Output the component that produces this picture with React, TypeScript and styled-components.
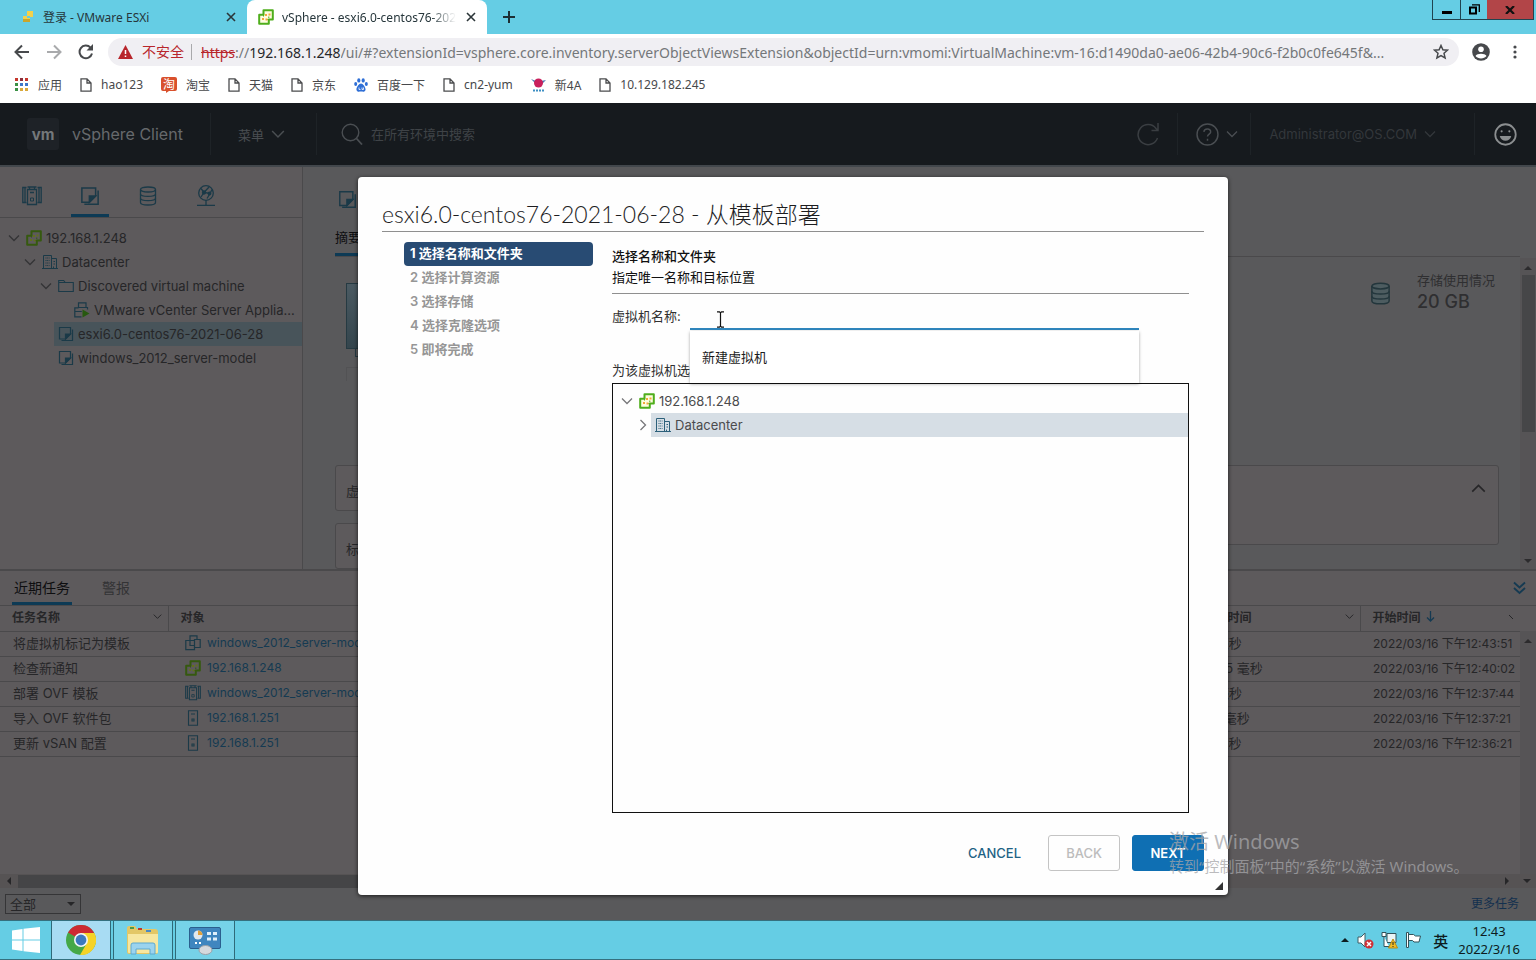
import React from 'react';
import styled, { createGlobalStyle } from 'styled-components';

const UI = `Inter, "Noto Sans CJK SC", sans-serif`;
const SYSTEM = `"Noto Sans", "Noto Sans CJK SC", sans-serif`;
const DISPLAY = `Lato, "Noto Sans CJK SC", sans-serif`;

const c = {
  sky: '#65cde4',
  header: '#161a1e',
  panel: '#5d5a5c',
  main: '#59595b',
  line: '#4a494b',
  text: '#262628',
  link: '#153a52',
  accent: '#0d3a55',
  outline: '#1b3a48',
  blue: '#0f6fb3',
};

const GlobalStyle = createGlobalStyle`
  * { box-sizing: border-box; }
  body { margin: 0; font-family: ${UI}; font-size: 13px; color: ${c.text}; overflow: hidden; }
  button, input, select { font: inherit; color: inherit; }
  button { background: none; border: 0; padding: 0; cursor: pointer; }
  h1, h2, h3, p, ul, ol { margin: 0; padding: 0; }
  ul, ol { list-style: none; }
  a { text-decoration: none; }
  svg { display: block; flex: none; }
`;

const Screen = styled.div`
  display: flex;
  flex-direction: column;
  min-height: 100vh;
  position: relative;
`;

/* ---------- icons ---------- */

type IconProps = { size?: number };

const Chevron = ({ dir = 'down', size = 12, width = 1.3 }: { dir?: 'down' | 'right' | 'up'; size?: number; width?: number }) => {
  const d = { down: 'M1 3.5 6 8.5 11 3.5', up: 'M1 8.5 6 3.5 11 8.5', right: 'M3.5 1 8.5 6 3.5 11' }[dir];
  return (
    <svg width={size} height={size} viewBox="0 0 12 12" fill="none" stroke="currentColor" strokeWidth={width}>
      <path d={d} />
    </svg>
  );
};

const VCenterIcon = ({ size = 16, dim = false }: IconProps & { dim?: boolean }) => {
  const green = dim ? '#36590f' : '#4fae1c';
  const dot = dim ? '#62701d' : '#f2a93b';
  return (
    <svg width={size} height={size} viewBox="0 0 16 16" fill={dim ? 'none' : '#fffde0'} stroke={green} strokeWidth="2" strokeLinejoin="round">
      <path d="M5.500 1.200h9.300v9.300h-4v4.300H1.200V5.800h4.300z" />
      <path d="M5.500 5.800v1.700M8.500 5.800H7M10.800 10.500H9.300M10.800 7.500V9" strokeWidth="1" />
      <g fill={dot} stroke="none">
        <rect x="4" y="9" width="2" height="2" />
        <rect x="7.500" y="9.500" width="2" height="2" />
        <rect x="7" y="5" width="2" height="2" />
        <rect x="10.500" y="4.500" width="2" height="2" />
      </g>
    </svg>
  );
};

const DatacenterIcon = () => (
  <svg width="16" height="16" viewBox="0 0 16 16" fill="none" stroke="currentColor">
    <path d="M1.500 14.500V1.500h8v13M9.500 4.500h5v10M0 14.500h16" />
    <path d="M3.500 4h4M3.500 6.500h4M3.500 9h4M3.500 11.500h4" strokeDasharray="1 .7" />
    <path d="M11.500 7.500h1.500M11.500 10h1.500M11.500 12.500v2" />
  </svg>
);

const FolderIcon = () => (
  <svg width="16" height="16" viewBox="0 0 16 16" fill="none" stroke="currentColor" strokeWidth="1.100">
    <path d="M.7 13.500v-11h5l1.500 2h8.100v9zM.7 4.500h6.500" />
  </svg>
);

const VmRunningIcon = () => (
  <svg width="16" height="16" viewBox="0 0 16 16" fill="none" stroke="currentColor" strokeWidth="1.200">
    <path d="M4.500 6V.8h7.500V5M4.500 5.800H.8v9h6.700M.8 9.500h7M4.500 5.500h9v2" />
    <path d="M8.500 7.500v8l7-4z" fill="#27590f" stroke="none" />
  </svg>
);

const VmIcon = () => (
  <svg width="16" height="16" viewBox="0 0 16 16" fill="none" stroke="currentColor" strokeWidth="1.200">
    <path d="M5 5.500V.8h7V4.500M5 5.500H.8v9.200h8.700v-2.200M5 5.500h4.500M5 5.500v5h4.500" />
    <path d="M9.500 4.500h5.700v8H9.500z" />
  </svg>
);

const TemplateIcon = ({ size = 16 }: IconProps) => (
  <svg width={size} height={size} viewBox="0 0 16 16" fill="none" stroke="currentColor" strokeWidth="1.200">
    <path d="M1.500 1.500h11v6.500l-5 5h-6z" />
    <path d="M12.500 8h-5v5z" fill="currentColor" />
    <path d="M14.500 3.500v11h-11" />
  </svg>
);

const HostsIcon = ({ size = 16 }: IconProps) => (
  <svg width={size} height={size} viewBox="0 0 20 20" fill="none" stroke="currentColor" strokeWidth="1.300">
    <path d="M4.500 1.500H.8v15h3.700M15.500 1.500h3.700v15h-3.700M3 1.500v15M17 1.500v15" />
    <path d="M5.500 3.500h9v15h-9zM7.500 1v2.500M12.500 1v2.500M5.500 1h9M8 6.500h4" />
    <path d="M8.500 12h3v3h-3z" strokeWidth="1" />
  </svg>
);

const HostIcon = () => (
  <svg width="16" height="16" viewBox="0 0 16 16" fill="none" stroke="currentColor" strokeWidth="1.100">
    <path d="M3.500.8h9v14.400h-9zM6 4h4M7 9h2v2H7z" />
  </svg>
);

const DatastoreIcon = ({ size = 20, fill = 'none' }: IconProps & { fill?: string }) => (
  <svg width={size} height={size} viewBox="0 0 20 20" fill={fill} stroke="currentColor" strokeWidth="1.300">
    <path d="M2.500 3.500v13c0 1.600 3.300 2.500 7.500 2.500s7.500-.9 7.500-2.500v-13" />
    <ellipse cx="10" cy="3.500" rx="7.500" ry="2.500" />
    <path d="M2.500 8c0 1.600 3.300 2.400 7.500 2.400s7.500-.8 7.500-2.400M2.500 12.300c0 1.600 3.300 2.400 7.500 2.400s7.500-.8 7.500-2.400" fill="none" />
  </svg>
);

const NetworkIcon = () => (
  <svg width="22" height="22" viewBox="0 0 22 22" fill="none" stroke="currentColor" strokeWidth="1.300">
    <circle cx="11" cy="8" r="7.300" />
    <path d="M6 3.500l3 4 6 1 2-4M9 7.500 6 12M9 7.500 14 2M15 8.500l-3 5M11 15.300v5M2 20.300h18" />
    <circle cx="9" cy="7.500" r="1.500" fill="currentColor" />
    <circle cx="14.500" cy="8.500" r="1.300" fill="currentColor" />
  </svg>
);

const PageIcon = () => (
  <svg width="12" height="14" viewBox="0 0 12 14" fill="none" stroke="#4b4c4e" strokeWidth="1.300">
    <path d="M1 .8h6L11 5v8.200H1zM7 .8V5h4" />
  </svg>
);

/* ---------- browser chrome ---------- */

const TabStrip = styled.div`
  display: flex;
  height: 34px;
  background: ${c.sky};
  font-family: ${SYSTEM};
  font-size: 12px;
  color: #26363b;
`;

const BrowserTab = styled.div<{ $active?: boolean }>`
  display: flex;
  align-items: center;
  gap: 8px;
  width: ${p => (p.$active ? 240 : 247)}px;
  padding: 0 9px 0 ${p => (p.$active ? 11 : 21)}px;
  border-radius: 8px 8px 0 0;
  background: ${p => (p.$active ? '#fff' : 'transparent')};
`;

const TabTitle = styled.span<{ $fade?: boolean }>`
  flex: 1;
  overflow: hidden;
  white-space: nowrap;
  ${p => p.$fade && 'mask-image: linear-gradient(90deg, #000 85%, transparent);'}
`;

const TabButton = styled.button`
  display: flex;
  align-items: center;
  padding: 2px;
`;

const NewTab = styled(TabButton)`
  margin-left: 14px;
`;

const WindowButtons = styled.div`
  display: flex;
  margin: 0 2px 0 auto;
  height: 20px;
  border: 1px solid #1f4450;
  border-top: 0;
`;

const WindowButton = styled.button<{ $close?: boolean }>`
  display: grid;
  place-items: center;
  width: ${p => (p.$close ? 46 : 27)}px;
  border-left: ${p => (p.$close ? 0 : 1)}px solid #1f4450;
  background: ${p => (p.$close ? '#b24548' : 'transparent')};
  &:first-child { border-left: 0; }
`;

const Toolbar = styled.div`
  display: flex;
  align-items: center;
  height: 36px;
  padding: 0 14px;
  background: #fff;
  color: #47494c;
  font-family: ${SYSTEM};
`;

const NavButtons = styled.div`
  display: flex;
  gap: 16px;
  margin-right: 14px;
`;

const NavButton = styled.button<{ $off?: boolean }>`
  color: ${p => (p.$off ? '#a9aaac' : '#47494c')};
`;

const AddressBar = styled.div`
  display: flex;
  flex: 1;
  align-items: center;
  height: 28px;
  padding: 0 10px;
  border-radius: 14px;
  background: #f0eff3;
  font-size: 14px;
  color: #74777a;
`;

const Insecure = styled.span`
  display: flex;
  align-items: center;
  gap: 9px;
  padding-right: 7px;
  margin-right: 9px;
  border-right: 1px solid #a9a9ac;
  line-height: 16px;
  color: #b8262c;
`;

const Scheme = styled.s`
  color: #b8262c;
`;

const Host = styled.span`
  color: #26272a;
`;

const UrlInput = styled.input`
  flex: 1;
  min-width: 0;
  padding: 0;
  border: 0;
  outline: 0;
  background: transparent;
`;

const ToolbarEnd = styled.div`
  display: flex;
  align-items: center;
  gap: 18px;
  margin-left: 13px;
`;

const Bookmarks = styled.nav`
  display: flex;
  align-items: center;
  gap: 18px;
  height: 33px;
  padding: 0 15px 4px;
  background: #fff;
  font-family: ${SYSTEM};
  font-size: 12px;
`;

const Bookmark = styled.a`
  display: flex;
  align-items: center;
  gap: 9px;
  color: #47484b;
`;

/* ---------- vSphere header ---------- */

const Client = styled.div`
  position: relative;
  display: flex;
  flex: 1;
  flex-direction: column;
`;

const AppHeader = styled.header`
  display: flex;
  align-items: center;
  height: 62px;
  background: ${c.header};
  color: #4a4e52;
`;

const Brand = styled.div`
  display: flex;
  align-items: center;
  gap: 13px;
  padding: 0 27px;
`;

const BrandMark = styled.div`
  display: grid;
  place-items: center;
  width: 32px;
  height: 32px;
  border-radius: 3px;
  background: #1e2227;
  color: #74787b;
  font-size: 15px;
  font-weight: 700;
`;

const BrandName = styled.h1`
  font-size: 16px;
  font-weight: 400;
  color: #66696c;
`;

const HeaderItem = styled.div`
  display: flex;
  align-items: center;
  height: 42px;
  border-left: 1px solid #1e2327;
`;

const HeaderButton = styled.button`
  display: flex;
  align-items: center;
  gap: 7px;
`;

const Search = styled.label`
  display: flex;
  flex: 1;
  align-items: center;
  gap: 8px;
  padding-left: 24px;
`;

const SearchInput = styled.input`
  width: 240px;
  padding: 0;
  border: 0;
  outline: 0;
  background: transparent;
  &::placeholder { color: #3f4347; }
`;

/* ---------- workspace ---------- */

const Workspace = styled.div`
  display: flex;
  height: 404px;
  background: ${c.main};
  border-top: 2px solid #42474c;
`;

const Sidebar = styled.aside`
  width: 303px;
  background: ${c.panel};
  border-right: 1px solid ${c.line};
`;

const ViewTabs = styled.div`
  display: flex;
  gap: 20px;
  height: 51px;
  padding-left: 13px;
  border-bottom: 1px solid ${c.line};
`;

const ViewTab = styled.button<{ $active?: boolean }>`
  display: grid;
  place-items: center;
  width: 38px;
  padding-top: 10px;
  border-bottom: 3px solid ${p => (p.$active ? c.accent : 'transparent')};
  color: ${c.outline};
`;

const Tree = styled.ul`
  padding-top: 8px;
`;

const TreeRow = styled.li<{ $level: number }>`
  display: flex;
  align-items: center;
  height: 24px;
  padding-left: ${p => p.$level * 16}px;
`;

const Toggle = styled.button<{ $color?: string }>`
  flex: none;
  width: 22px;
  height: 24px;
  padding-left: 8px;
  color: ${p => p.$color};
`;

const TreeLabel = styled.span<{ $bg?: string }>`
  display: flex;
  flex: 1;
  align-items: center;
  gap: 4px;
  min-width: 0;
  height: 24px;
  padding: 0 4px;
  background: ${p => p.$bg || 'transparent'};
  white-space: nowrap;
`;

const TreeIcon = styled.span<{ $color: string }>`
  color: ${p => p.$color};
`;

const TreeText = styled.span`
  overflow: hidden;
  text-overflow: ellipsis;
`;

const Summary = styled.main`
  display: flex;
  flex: 1;
  flex-direction: column;
  min-width: 0;
  padding-left: 32px;
`;

const ObjectBar = styled.div`
  display: flex;
  flex-direction: column;
  justify-content: space-between;
  align-items: flex-start;
  height: 90px;
  padding-top: 23px;
  border-bottom: 1px solid ${c.line};
  color: ${c.outline};
`;

const ObjectIcon = styled.span`
  padding-left: 3px;
`;

const SummaryTab = styled.button`
  padding-bottom: 7px;
  border-bottom: 3px solid ${c.accent};
  color: #0e0e10;
`;

const Overview = styled.div`
  display: flex;
  justify-content: space-between;
  height: 208px;
  padding: 12px 25px 0 11px;
`;

const ConsolePreview = styled.div`
  width: 150px;
  padding-top: 14px;
`;

const ConsoleScreen = styled.div`
  height: 66px;
  border: 1px solid #263a42;
  background: linear-gradient(#4b5a62, #34454d);
`;

const ConsoleStand = styled.div`
  height: 8px;
  margin: 0 9px;
  border: solid #263a42;
  border-width: 0 1px 1px;
`;

const ConsoleLink = styled.div`
  height: 14px;
  margin-top: 10px;
  border: 1px solid #525254;
  border-bottom: 0;
`;

const Usage = styled.dl`
  display: flex;
  gap: 25px;
  margin: 0;
  color: #2f2f31;
`;

const UsageIcon = styled.dt`
  padding-top: 13px;
  color: #23363c;
`;

const UsageValue = styled.dd`
  margin: 0;
  line-height: 22px;
`;

const Amount = styled.div`
  font-size: 18px;
  font-weight: 500;
`;

const Cards = styled.div`
  display: grid;
  grid-template-columns: 1fr 1fr;
  align-items: start;
  gap: 12px 24px;
  padding-right: 21px;
  overflow: hidden;
`;

const Card = styled.section<{ $tall?: boolean }>`
  display: flex;
  align-items: flex-start;
  justify-content: space-between;
  grid-row: ${p => (p.$tall ? 'span 2' : 'auto')};
  height: ${p => (p.$tall ? 80 : 46)}px;
  padding: 15px 12px 0 10px;
  border: 1px solid ${c.line};
  border-radius: 3px;
  background: ${c.panel};
`;

const ScrollTrack = styled.div<{ $offset?: number }>`
  display: flex;
  flex: none;
  flex-direction: column;
  align-items: center;
  width: 16px;
  margin-top: ${p => p.$offset || 0}px;
  padding: 6px 0 4px;
  background: #565456;
  color: #2c2b2d;
`;

const ScrollThumb = styled.div`
  width: 13px;
  height: 157px;
  margin: 3px 0 auto;
  background: #464648;
`;

/* ---------- task panel ---------- */

const TaskPanel = styled.section`
  display: flex;
  flex: 1;
  flex-direction: column;
  border-top: 2px solid ${c.line};
  background: ${c.panel};
`;

const TaskTabs = styled.div`
  display: flex;
  height: 35px;
  padding: 0 10px 0 12px;
  gap: 28px;
  border-bottom: 1px solid ${c.line};
  font-size: 14px;
`;

const TaskTab = styled.button<{ $active?: boolean }>`
  padding: 1px 2px 0;
  border-bottom: 3px solid ${p => (p.$active ? c.accent : 'transparent')};
  color: ${p => (p.$active ? '#0e0e10' : '#333335')};
`;

const Collapse = styled.button`
  margin-left: auto;
  color: ${c.link};
`;

const TaskTable = styled.table`
  width: 100%;
  border-collapse: collapse;
  table-layout: fixed;
  white-space: nowrap;
`;

const Th = styled.th`
  height: 25px;
  padding: 0 6px 3px 12px;
  border-right: 1px solid ${c.line};
  border-bottom: 1px solid ${c.line};
  text-align: left;
  font-size: 12px;
  font-weight: 600;
  overflow: hidden;
  &:last-child { border-right: 0; }
`;

const ThInner = styled.span`
  display: flex;
  align-items: center;
  justify-content: space-between;
`;

const Sorted = styled.span`
  display: flex;
  align-items: center;
  gap: 5px;
`;

const Td = styled.td<{ $small?: boolean }>`
  height: 25px;
  padding: 0 0 2px 13px;
  border-bottom: 1px solid ${c.line};
  font-size: ${p => (p.$small ? 12 : 13)}px;
  overflow: hidden;
`;

const ObjectLink = styled.a`
  display: flex;
  align-items: center;
  gap: 6px;
  padding-left: 4px;
  color: ${c.link};
`;

const TaskArea = styled.div`
  display: flex;
  flex: 1;
`;

const TaskGrid = styled.div`
  flex: 1;
  min-width: 0;
`;

const HorizontalScroll = styled.div`
  display: flex;
  align-items: center;
  justify-content: space-between;
  height: 14px;
  padding: 0 5px 0 5px;
  background: #565354;
`;

const HorizontalThumb = styled.div`
  width: 1010px;
  height: 13px;
  margin: 0 auto 0 5px;
  background: #454547;
`;

const RightArrows = styled.span`
  display: flex;
  gap: 12px;
`;

const TaskFooter = styled.footer`
  display: flex;
  align-items: center;
  justify-content: space-between;
  height: 32px;
  padding: 0 17px 0 5px;
  background: ${c.main};
`;

const FilterBox = styled.label`
  display: grid;
  align-items: center;
  width: 76px;
  height: 20px;
  border: 1px solid #353537;
`;

const Filter = styled.select`
  grid-area: 1 / 1;
  height: 18px;
  padding: 0 4px;
  border: 0;
  appearance: none;
  background: transparent;
  line-height: 18px;
`;

const FilterArrow = styled.span`
  grid-area: 1 / 1;
  justify-self: end;
  padding-right: 5px;
  pointer-events: none;
`;

const MoreTasks = styled.a`
  padding-bottom: 3px;
  font-size: 12px;
  color: #13304e;
`;

/* ---------- deploy dialog ---------- */

const Dialog = styled.form`
  position: absolute;
  top: 74px;
  left: 358px;
  width: 870px;
  padding: 20px 24px 24px;
  border-radius: 4px;
  background: #fefefe;
  box-shadow: 0 1px 4px rgba(0, 0, 0, 0.7);
  color: #313131;
`;

const DialogTitle = styled.h2`
  height: 35px;
  border-bottom: 1px solid #8f8f8f;
  font-family: ${DISPLAY};
  font-size: 23px;
  font-weight: 300;
  line-height: 34px;
  color: #1d1d1f;
  white-space: nowrap;
`;

const DialogBody = styled.div`
  display: grid;
  grid-template-columns: 189px 1fr;
  gap: 19px;
  padding: 10px 15px 0 22px;
`;

const Step = styled.button<{ $active?: boolean }>`
  display: block;
  width: 100%;
  height: 24px;
  padding: 0 6px 3px;
  border-radius: 4px;
  background: ${p => (p.$active ? '#284b73' : 'transparent')};
  color: ${p => (p.$active ? '#fff' : '#969696')};
  font-weight: ${p => (p.$active ? 700 : 600)};
  text-align: left;
`;

const StepHeading = styled.div`
  padding: 4px 0 5px;
  border-bottom: 1px solid #8f8f8f;
  line-height: 21px;
  color: #111;
`;

const StepTitle = styled.h3`
  font-size: 13px;
  font-weight: 500;
`;

const NameRow = styled.div`
  position: relative;
  display: flex;
  height: 24px;
  margin: 12px 0 30px;
`;

const NameLabel = styled.label`
  width: 78px;
  line-height: 21px;
`;

const NameInput = styled.input`
  width: 449px;
  height: 24px;
  padding: 0 6px;
  border: 0;
  border-bottom: 2px solid #2f86bd;
  outline: 0;
  background: transparent;
`;

const Suggestions = styled.ul`
  position: absolute;
  z-index: 1;
  top: 25px;
  left: 78px;
  width: 449px;
  padding: 14px 12px;
  background: #fff;
  box-shadow: 0 1px 3px rgba(0, 0, 0, 0.35);
  line-height: 24px;
  color: #1b1b1b;
`;

const LocationTree = styled.div`
  height: 430px;
  margin-top: 3px;
  border: 1px solid #111;
  color: #4b4b4d;
  & > ul { padding-top: 5px; }
`;

const LocationLabel = styled.p`
  line-height: 20px;
`;

const DialogButtons = styled.div`
  display: flex;
  justify-content: flex-end;
  gap: 12px;
  margin-top: 22px;
`;

const DialogButton = styled.button<{ $kind: 'text' | 'disabled' | 'primary' }>`
  min-width: 72px;
  height: 36px;
  padding: 0 12px;
  border: 1px solid ${p => ({ text: 'transparent', disabled: '#c4c4c4', primary: c.blue })[p.$kind]};
  border-radius: 3px;
  background: ${p => (p.$kind === 'primary' ? c.blue : 'transparent')};
  color: ${p => ({ text: '#1f6285', disabled: '#bcbcbc', primary: '#fff' })[p.$kind]};
  font-weight: ${p => (p.$kind === 'primary' ? 600 : 500)};
`;

const CancelButton = styled(DialogButton)`
  margin-right: 2px;
`;

const ResizeGrip = styled.span`
  position: absolute;
  right: 5px;
  bottom: 5px;
`;

const TextCursor = styled.span`
  position: absolute;
  top: 5px;
  left: 104px;
  pointer-events: none;
`;

const Watermark = styled.div`
  position: absolute;
  right: 64px;
  bottom: 82px;
  width: 303px;
  font-family: ${SYSTEM};
  font-size: 15px;
  line-height: 24px;
  color: rgba(165, 165, 168, 0.75);
  white-space: nowrap;
  pointer-events: none;
`;

const WatermarkTitle = styled.div`
  font-size: 20px;
`;

/* ---------- task bar ---------- */

const Taskbar = styled.footer`
  display: flex;
  align-items: stretch;
  height: 40px;
  border-top: 1px solid #35707f;
  border-bottom: 1px solid #35707f;
  background: ${c.sky};
  font-family: ${SYSTEM};
  color: #0d1c20;
`;

const StartButton = styled.button`
  display: grid;
  place-items: center;
  width: 51px;
`;

const AppButton = styled.button<{ $active?: boolean }>`
  display: grid;
  place-items: center;
  width: 60px;
  margin-right: 2px;
  border: solid #2f6a79;
  border-width: 0 1px;
  background: ${p => (p.$active ? '#a8dcf3' : '#76d2e8')};
`;

const Tray = styled.div`
  display: flex;
  align-items: center;
  gap: 7px;
  margin-left: auto;
  padding-right: 16px;
`;

const Clock = styled.time`
  padding-left: 3px;
  font-size: 13px;
  line-height: 18px;
  text-align: center;
`;

const InputMode = styled.span`
  padding-left: 4px;
  font-size: 15px;
  font-weight: 500;
`;

/* ---------- data ---------- */

type Node = { level: number; text: string; icon: React.ReactNode; open?: 'down' | 'right'; selected?: boolean };

const inventory: Node[] = [
  { level: 0, text: '192.168.1.248', icon: <VCenterIcon dim />, open: 'down' },
  { level: 1, text: 'Datacenter', icon: <DatacenterIcon />, open: 'down' },
  { level: 2, text: 'Discovered virtual machine', icon: <FolderIcon />, open: 'down' },
  { level: 3, text: 'VMware vCenter Server Appliance', icon: <VmRunningIcon /> },
  { level: 2, text: 'esxi6.0-centos76-2021-06-28', icon: <TemplateIcon />, selected: true },
  { level: 2, text: 'windows_2012_server-model', icon: <TemplateIcon /> },
];

const locations: Node[] = [
  { level: 0, text: '192.168.1.248', icon: <VCenterIcon />, open: 'down' },
  { level: 1, text: 'Datacenter', icon: <DatacenterIcon />, open: 'right', selected: true },
];

const tasks = [
  ['将虚拟机标记为模板', <VmIcon />, 'windows_2012_server-model', '3 毫秒', '2022/03/16 下午12:43:51'],
  ['检查新通知', <VCenterIcon dim />, '192.168.1.248', '1,125 毫秒', '2022/03/16 下午12:40:02'],
  ['部署 OVF 模板', <HostsIcon />, 'windows_2012_server-model', '4 毫秒', '2022/03/16 下午12:37:44'],
  ['导入 OVF 软件包', <HostIcon />, '192.168.1.251', '24 毫秒', '2022/03/16 下午12:37:21'],
  ['更新 vSAN 配置', <HostIcon />, '192.168.1.251', '5 毫秒', '2022/03/16 下午12:36:21'],
] as const;

const steps = ['选择名称和文件夹', '选择计算资源', '选择存储', '选择克隆选项', '即将完成'];

type TreeProps = { nodes: Node[]; color: string; toggle: string; highlight: string; label: string };

const NodeTree = ({ nodes, color, toggle, highlight, label }: TreeProps) => (
  <Tree role="tree" aria-label={label}>
    {nodes.map(n => (
      <TreeRow key={n.text} $level={n.level} role="treeitem" aria-selected={!!n.selected}>
        {n.open ? (
          <Toggle type="button" $color={toggle} aria-label={`${n.text} 展开`}><Chevron dir={n.open} /></Toggle>
        ) : (
          <Toggle as="span" />
        )}
        <TreeLabel $bg={n.selected ? highlight : undefined}>
          <TreeIcon $color={color}>{n.icon}</TreeIcon>
          <TreeText>{n.text}</TreeText>
        </TreeLabel>
      </TreeRow>
    ))}
  </Tree>
);

const Triangle = ({ dir }: { dir: 'up' | 'down' | 'left' | 'right' }) => {
  const d = { up: 'M0 6 4 2l4 4z', down: 'M0 2h8L4 6z', left: 'M6 0v8L2 4z', right: 'M2 0v8l4-4z' }[dir];
  return <svg width="8" height="8" viewBox="0 0 8 8" fill="currentColor"><path d={d} /></svg>;
};

const Cross = () => (
  <svg width="10" height="10" viewBox="0 0 10 10" stroke="#2b3538" strokeWidth="1.600"><path d="M1 1l8 8M9 1 1 9" /></svg>
);

/* ---------- sections ---------- */

const Browser = () => (
  <>
    <TabStrip>
      <BrowserTab>
        <svg width="14" height="14" viewBox="0 0 14 14">
          <path d="M6 1h6v6H9v4H2V6h4z" fill="#f3d14b" /><path d="M6 6h3v2H6z" fill="#65cde4" /><path d="M2 9h7v3H2z" fill="#c9a52c" />
        </svg>
        <TabTitle>登录 - VMware ESXi</TabTitle>
        <TabButton aria-label="关闭标签页"><Cross /></TabButton>
      </BrowserTab>
      <BrowserTab $active>
        <VCenterIcon />
        <TabTitle $fade>vSphere - esxi6.0-centos76-2021</TabTitle>
        <TabButton aria-label="关闭标签页"><Cross /></TabButton>
      </BrowserTab>
      <NewTab aria-label="新标签页">
        <svg width="12" height="12" viewBox="0 0 12 12" stroke="#1d2f34" strokeWidth="2"><path d="M6 0v12M0 6h12" /></svg>
      </NewTab>
      <WindowButtons>
        <WindowButton aria-label="最小化"><svg width="10" height="10" viewBox="0 0 10 10"><path d="M0 6h10v3H0z" /></svg></WindowButton>
        <WindowButton aria-label="还原">
          <svg width="11" height="11" viewBox="0 0 11 11" fill="none" stroke="#000"><path d="M1 3.500h6v6H1z" strokeWidth="2" /><path d="M3 .8h7.300V8" strokeWidth="1.300" /></svg>
        </WindowButton>
        <WindowButton $close aria-label="关闭"><svg width="10" height="8" viewBox="0 0 10 8" stroke="#111" strokeWidth="2.200"><path d="M1 0l8 8M9 0 1 8" /></svg></WindowButton>
      </WindowButtons>
    </TabStrip>
    <Toolbar>
      <NavButtons>
        <NavButton aria-label="后退"><svg width="16" height="16" viewBox="0 0 16 16" fill="none" stroke="currentColor" strokeWidth="2"><path d="M15 8H2M8 1.500 1.500 8 8 14.500" /></svg></NavButton>
        <NavButton $off aria-label="前进"><svg width="16" height="16" viewBox="0 0 16 16" fill="none" stroke="currentColor" strokeWidth="2"><path d="M1 8h13M8 1.500 14.500 8 8 14.500" /></svg></NavButton>
        <NavButton aria-label="重新加载"><svg width="16" height="16" viewBox="0 0 16 16" fill="none" stroke="currentColor" strokeWidth="2"><path d="M14 9.500A6.300 6.300 0 1 1 12.500 3.600L14 5" /><path d="M15 0v6.500H8.500z" fill="currentColor" stroke="none" /></svg></NavButton>
      </NavButtons>
      <AddressBar>
        <Insecure>
          <svg width="15" height="14" viewBox="0 0 15 14"><path d="M7.500 0 15 14H0z" fill="#b8262c" /><path d="M7.500 5v4M7.500 10.500V12" stroke="#fff" strokeWidth="1.500" /></svg>
          不安全
        </Insecure>
        <Scheme>https</Scheme>://<Host>192.168.1.248</Host>
        <UrlInput
          aria-label="地址"
          defaultValue="/ui/#?extensionId=vsphere.core.inventory.serverObjectViewsExtension&objectId=urn:vmomi:VirtualMachine:vm-16:d1490da0-ae06-42b4-90c6-f2b0c0fe645f&..."
        />
        <svg width="16" height="16" viewBox="0 0 16 16" fill="none" stroke="#47494c" strokeWidth="1.500"><path d="m8 1.500 1.900 4.300 4.600.4-3.500 3.100 1.100 4.600L8 11.500l-4.100 2.400L5 9.300 1.500 6.200l4.600-.4z" /></svg>
      </AddressBar>
      <ToolbarEnd>
        <NavButton aria-label="个人资料">
          <svg width="18" height="18" viewBox="0 0 18 18"><circle cx="9" cy="9" r="8.800" fill="#47494c" /><circle cx="9" cy="6.200" r="2.800" fill="#fff" /><path d="M3.500 13c1.500-3 9.500-3 11 0-2.500 3.200-8.500 3.200-11 0z" fill="#fff" /></svg>
        </NavButton>
        <NavButton aria-label="更多">
          <svg width="14" height="16" viewBox="0 0 14 16" fill="#47494c"><circle cx="7" cy="3" r="1.600" /><circle cx="7" cy="8" r="1.600" /><circle cx="7" cy="13" r="1.600" /></svg>
        </NavButton>
      </ToolbarEnd>
    </Toolbar>
    <Bookmarks>
      <Bookmark href="#apps">
        <svg width="14" height="14" viewBox="0 0 14 14">
          {['#c5362c', '#8b2f3c', '#c5362c', '#3a9145', '#3e77c9', '#3e77c9', '#3a9145', '#d9a93b', '#d9a93b'].map((f, i) => (
            <rect key={i} x={(i % 3) * 5} y={Math.floor(i / 3) * 5} width="3" height="3" fill={f} />
          ))}
        </svg>
        应用
      </Bookmark>
      <Bookmark href="#hao123"><PageIcon />hao123</Bookmark>
      <Bookmark href="#taobao">
        <svg width="16" height="16" viewBox="0 0 16 16"><path d="M2 0h12q2 0 2 2v10q0 2-2 2H8l-3 2v-2H2q-2 0-2-2V2q0-2 2-2z" fill="#d9502c" /><text x="2" y="11.500" fontSize="12" fill="#fff">淘</text></svg>
        淘宝
      </Bookmark>
      <Bookmark href="#tmall"><PageIcon />天猫</Bookmark>
      <Bookmark href="#jd"><PageIcon />京东</Bookmark>
      <Bookmark href="#baidu">
        <svg width="14" height="14" viewBox="0 0 14 14" fill="#2f6fd6"><ellipse cx="4.800" cy="2.400" rx="1.600" ry="2.200" /><ellipse cx="9.200" cy="2.400" rx="1.600" ry="2.200" /><ellipse cx="1.700" cy="6" rx="1.500" ry="2" /><ellipse cx="12.300" cy="6" rx="1.500" ry="2" /><path d="M7 5.500c2 0 5 4 4.500 6.500-.6 2.500-3 1.500-4.500 1.500s-3.900 1-4.500-1.500C2 9.500 5 5.500 7 5.500z" /><path d="M5 9.500v2h1.500M8 9.500v2h1.500v-2" stroke="#fff" strokeWidth=".8" fill="none" /></svg>
        百度一下
      </Bookmark>
      <Bookmark href="#cn2"><PageIcon />cn2-yum</Bookmark>
      <Bookmark href="#4a">
        <svg width="15" height="14" viewBox="0 0 15 14"><path d="M0 1 5 3v3zM15 2l-5 1v4z" fill="#4b79b5" /><circle cx="7.500" cy="5" r="4.500" fill="#c9205c" /><path d="M2 12.500h11" stroke="#3d8fc4" strokeWidth="2" strokeDasharray="2 1" /></svg>
        新4A
      </Bookmark>
      <Bookmark href="#ip"><PageIcon />10.129.182.245</Bookmark>
    </Bookmarks>
  </>
);

const MenuItem = styled(HeaderItem)`
  padding: 0 31px 0 27px;
`;
const IconItem = styled(HeaderItem)`
  padding: 0 12px 0 18px;
`;
const UserItem = styled(HeaderItem)`
  padding: 0 38px 0 18px;
  color: #33373b;
`;
const FaceItem = styled(HeaderItem)`
  padding: 0 19px;
  color: #8b8e90;
`;
const Refresh = styled(HeaderButton)`
  margin-right: 18px;
  color: #3a3e42;
`;

const Header = () => (
  <AppHeader>
    <Brand><BrandMark>vm</BrandMark><BrandName>vSphere Client</BrandName></Brand>
    <MenuItem><HeaderButton>菜单<Chevron size={14} /></HeaderButton></MenuItem>
    <HeaderItem as={Search}>
      <svg width="22" height="22" viewBox="0 0 22 22" fill="none" stroke="currentColor" strokeWidth="1.400"><circle cx="9.500" cy="9.500" r="8.300" /><path d="m15.500 15.500 5.500 6" strokeWidth="1.800" /></svg>
      <SearchInput placeholder="在所有环境中搜索" aria-label="搜索" />
    </HeaderItem>
    <Refresh aria-label="刷新">
      <svg width="22" height="24" viewBox="0 0 22 24" fill="none" stroke="currentColor" strokeWidth="1.500"><path d="M20.500 16A10 10 0 1 1 19 6.500L21 8.500M21 1v7.500h-6.500" /></svg>
    </Refresh>
    <IconItem>
      <HeaderButton aria-label="帮助">
        <svg width="23" height="23" viewBox="0 0 22 22" fill="none" stroke="currentColor" strokeWidth="1.400"><circle cx="11" cy="11" r="10" /><path d="M7.500 8.500c.5-4 7-3.500 6.500.2-.2 2-3 2-3 4.300M11 15v2" /></svg>
        <Chevron />
      </HeaderButton>
    </IconItem>
    <UserItem><HeaderButton>Administrator@OS.COM<Chevron /></HeaderButton></UserItem>
    <FaceItem>
      <HeaderButton aria-label="反馈">
        <svg width="23" height="23" viewBox="0 0 22 22" fill="none" stroke="currentColor" strokeWidth="1.700"><circle cx="11" cy="11" r="9.800" /><circle cx="7.300" cy="8" r="1" fill="currentColor" stroke="none" /><circle cx="14.700" cy="8" r="1" fill="currentColor" stroke="none" /><path d="M5.500 12.500h11c-1 6-10 6-11 0z" fill="currentColor" stroke="none" /></svg>
      </HeaderButton>
    </FaceItem>
  </AppHeader>
);

const WorkArea = () => (
  <Workspace>
    <Sidebar>
      <ViewTabs>
        <ViewTab aria-label="主机和集群"><HostsIcon size={20} /></ViewTab>
        <ViewTab $active aria-label="虚拟机和模板"><TemplateIcon size={20} /></ViewTab>
        <ViewTab aria-label="存储"><DatastoreIcon /></ViewTab>
        <ViewTab aria-label="网络"><NetworkIcon /></ViewTab>
      </ViewTabs>
      <NodeTree nodes={inventory} color={c.outline} toggle="#343436" highlight="#48545a" label="清单" />
    </Sidebar>
    <Summary>
      <ObjectBar>
        <ObjectIcon><TemplateIcon size={19} /></ObjectIcon>
        <SummaryTab>摘要</SummaryTab>
      </ObjectBar>
      <Overview>
        <ConsolePreview>
          <ConsoleScreen />
          <ConsoleStand />
          <ConsoleLink />
        </ConsolePreview>
        <Usage>
          <UsageIcon><DatastoreIcon size={23} fill="#4d5c60" /></UsageIcon>
          <UsageValue>存储使用情况<Amount>20 GB</Amount></UsageValue>
        </Usage>
      </Overview>
      <Cards>
        <Card>虚拟机硬件</Card>
        <Card $tall><span /><button aria-label="折叠"><Chevron dir="up" size={15} /></button></Card>
        <Card>标记</Card>
      </Cards>
    </Summary>
    <ScrollTrack $offset={91}>
      <Triangle dir="up" /><ScrollThumb /><Triangle dir="down" />
    </ScrollTrack>
  </Workspace>
);

const Tasks = () => (
  <TaskPanel>
    <TaskTabs>
      <TaskTab $active>近期任务</TaskTab>
      <TaskTab>警报</TaskTab>
      <Collapse aria-label="折叠面板">
        <svg width="13" height="14" viewBox="0 0 13 14" fill="none" stroke="currentColor" strokeWidth="1.800"><path d="m1 1.500 5.500 5L12 1.500M1 7l5.500 5L12 7" /></svg>
      </Collapse>
    </TaskTabs>
    <TaskArea>
      <TaskGrid>
        <TaskTable>
          <colgroup>
            <col style={{ width: 168 }} />
            <col />
            <col style={{ width: 169 }} />
            <col style={{ width: 160 }} />
          </colgroup>
          <thead>
            <tr>
              <Th><ThInner>任务名称<Chevron size={9} /></ThInner></Th>
              <Th>对象</Th>
              <Th><ThInner>排队时间<Chevron size={9} /></ThInner></Th>
              <Th>
                <ThInner>
                  <Sorted>开始时间<svg width="9" height="11" viewBox="0 0 9 11" fill="none" stroke={c.link} strokeWidth="1.300"><path d="M4.500 0v10M1 6.500l3.500 3.500L8 6.500" /></svg></Sorted>
                  <svg width="5" height="6" viewBox="0 0 5 6" stroke="currentColor"><path d="M0 1l4 4" /></svg>
                </ThInner>
              </Th>
            </tr>
          </thead>
          <tbody>
            {tasks.map(([name, icon, object, queued, start]) => (
              <tr key={name}>
                <Td>{name}</Td>
                <Td $small><ObjectLink href="#object"><TreeIcon $color={c.outline}>{icon}</TreeIcon>{object}</ObjectLink></Td>
                <Td>{queued}</Td>
                <Td $small>{start}</Td>
              </tr>
            ))}
          </tbody>
        </TaskTable>
      </TaskGrid>
      <ScrollTrack $offset={25}><Triangle dir="up" /></ScrollTrack>
    </TaskArea>
    <HorizontalScroll>
      <Triangle dir="left" /><HorizontalThumb />
      <RightArrows><Triangle dir="right" /><Triangle dir="down" /></RightArrows>
    </HorizontalScroll>
    <TaskFooter>
      <FilterBox>
        <Filter aria-label="任务筛选" defaultValue="all"><option value="all">全部</option></Filter>
        <FilterArrow><Triangle dir="down" /></FilterArrow>
      </FilterBox>
      <MoreTasks href="#more">更多任务</MoreTasks>
    </TaskFooter>
  </TaskPanel>
);

const DeployDialog = () => (
  <Dialog role="dialog" aria-labelledby="deploy-title" onSubmit={e => e.preventDefault()}>
    <DialogTitle id="deploy-title">esxi6.0-centos76-2021-06-28 - 从模板部署</DialogTitle>
    <DialogBody>
      <ol>
        {steps.map((s, i) => (
          <li key={s}><Step type="button" $active={i === 0}>{i + 1} {s}</Step></li>
        ))}
      </ol>
      <div>
        <StepHeading>
          <StepTitle>选择名称和文件夹</StepTitle>
          <p>指定唯一名称和目标位置</p>
        </StepHeading>
        <NameRow>
          <NameLabel htmlFor="vm-name">虚拟机名称:</NameLabel>
          <NameInput id="vm-name" />
          <TextCursor>
            <svg width="9" height="17" viewBox="0 0 9 17" fill="none" stroke="#111" strokeWidth="1.200"><path d="M1 .8h2.500l1 1 1-1H8M4.500 1.800v13.400M1 16.200h2.500l1-1 1 1H8" /></svg>
          </TextCursor>
          <Suggestions><li>新建虚拟机</li></Suggestions>
        </NameRow>
        <LocationLabel>为该虚拟机选择位置。</LocationLabel>
        <LocationTree>
          <NodeTree nodes={locations} color="#2c607a" toggle="#77777a" highlight="#d6dee5" label="位置" />
        </LocationTree>
      </div>
    </DialogBody>
    <DialogButtons>
      <CancelButton type="button" $kind="text">CANCEL</CancelButton>
      <DialogButton type="button" $kind="disabled" disabled>BACK</DialogButton>
      <DialogButton type="submit" $kind="primary">NEXT</DialogButton>
    </DialogButtons>
    <ResizeGrip>
      <svg width="8" height="8" viewBox="0 0 8 8" fill="#333"><path d="M8 0v8H0z" /></svg>
    </ResizeGrip>
  </Dialog>
);

const DesktopTaskbar = () => (
  <Taskbar>
    <StartButton aria-label="开始">
      <svg width="28" height="26" viewBox="0 0 28 26" fill="#fff"><path d="M0 3.500 10.500 2v10.500H0zM11.500 1.800 28 0v12.500H11.500zM0 13.500h10.500V24L0 22.500zM11.500 13.500H28V26l-16.500-1.800z" /></svg>
    </StartButton>
    <AppButton $active aria-label="Google Chrome">
      <svg width="30" height="30" viewBox="0 0 30 30">
        <circle cx="15" cy="15" r="15" fill="#45a847" />
        <path d="M15 15 2 7.500A15 15 0 0 1 28 7.500z" fill="#cc2a32" />
        <path d="M15 15V8h13.300A15 15 0 0 1 14 30l7-12z" fill="#f5d327" />
        <circle cx="15" cy="15" r="7" fill="#f2f5f7" /><circle cx="15" cy="15" r="5.400" fill="#3b79bf" />
      </svg>
    </AppButton>
    <AppButton aria-label="文件资源管理器">
      <svg width="34" height="30" viewBox="0 0 34 30">
        <path d="M1 3q0-2 2-2h6l2 3h18q3 0 3 3v20q0 2-2 2H3q-2 0-2-2z" fill="#e3c766" />
        <path d="M4 2h4v2H4z" fill="#4a9a4a" /><path d="M12 3h4v2h-4z" fill="#c0392b" /><path d="M20 5h5v2h-5z" fill="#4a8ac4" />
        <path d="M2 9h30v18q0 1-1 1H3q-1 0-1-1z" fill="#f7e7a0" />
        <path d="M5 29V20q0-2 2-2h20q2 0 2 2v9h-5v-5H10v5z" fill="#9bd3ee" stroke="#5da9d0" />
      </svg>
    </AppButton>
    <AppButton aria-label="控制面板">
      <svg width="32" height="30" viewBox="0 0 32 30">
        <rect x=".5" y="2.500" width="31" height="21" rx="1.500" fill="#3f86bf" stroke="#2b5f8e" />
        <circle cx="9" cy="10" r="4.500" fill="#e2e9ee" /><path d="M9 10V5.500A4.500 4.500 0 0 1 13.500 10z" fill="#e0a23d" />
        <path d="M18 8.500h4M24 8.500h4M18 14h4M24 14h4" stroke="#dff0fa" strokeWidth="3" /><path d="M6 18h2M10 18h2" stroke="#fff" strokeWidth="2" />
        <ellipse cx="16.500" cy="25" rx="6.500" ry="4.500" fill="#d5d9dd" stroke="#9aa1a8" />
      </svg>
    </AppButton>
    <Tray>
      <Triangle dir="up" />
      <svg width="18" height="18" viewBox="0 0 18 18"><path d="M2 6h3l4-4v14l-4-4H2z" fill="#fff" stroke="#3f5c64" /><circle cx="13" cy="13" r="4.500" fill="#cf2f36" /><path d="m11 11 4 4M15 11l-4 4" stroke="#fff" strokeWidth="1.500" /></svg>
      <svg width="17" height="18" viewBox="0 0 17 18" fill="none" stroke="#33525a"><path d="M6 2.500h9v9H6z" fill="#e9f4f6" /><path d="M1 1.500h4v4H1zM3 5.500v10h5" fill="#fff" /><path d="m12 8 4.500 9h-9z" fill="#f2bd26" stroke="#b98a12" /><path d="M12 11v3M12 15v1" stroke="#222" /></svg>
      <svg width="17" height="18" viewBox="0 0 17 18" fill="#fff" stroke="#33525a"><path d="M1.500 1.500h2v15h-2zM3.500 3.500h5l2 1.500h5l-1.500 6H9l-1.500-1.500h-4z" /></svg>
      <InputMode>英</InputMode>
      <Clock>12:43<br />2022/3/16</Clock>
    </Tray>
  </Taskbar>
);

export default function App() {
  return (
    <Screen>
      <GlobalStyle />
      <Browser />
      <Client>
        <Header />
        <WorkArea />
        <Tasks />
        <DeployDialog />
      </Client>
      <DesktopTaskbar />
      <Watermark>
        <WatermarkTitle>激活 Windows</WatermarkTitle>
        转到“控制面板”中的“系统”以激活 Windows。
      </Watermark>
    </Screen>
  );
}
